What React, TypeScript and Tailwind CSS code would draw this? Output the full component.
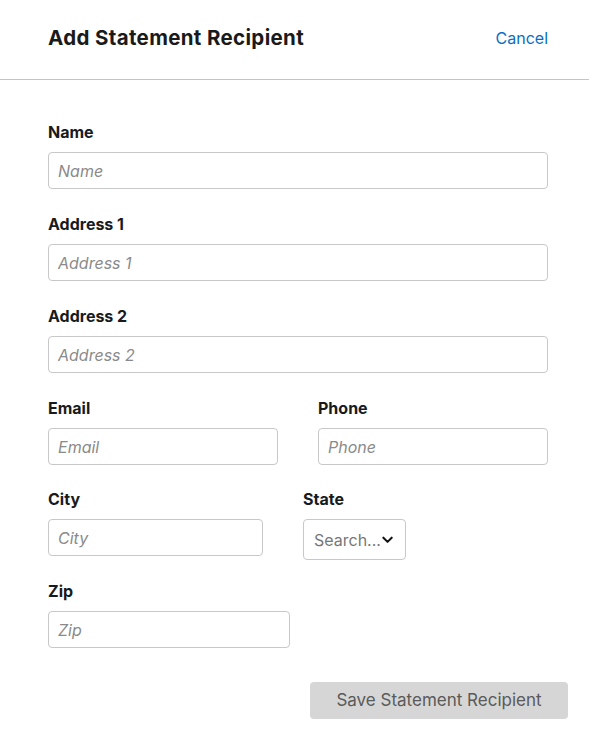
import React from "react";

const font = { fontFamily: "Inter, 'Noto Sans', sans-serif" };

function Field({ label, placeholder, width }: { label: string; placeholder: string; width?: string }) {
  return (
    <div className="flex flex-col">
      <label className="h-6 text-[16px] leading-6 font-bold text-[#1a1a1a] mb-2">{label}</label>
      <input
        placeholder={placeholder}
        className={`h-[37px] ${width ?? "w-full"} rounded-[4px] border border-[#c8c8c8] bg-white px-[9px] text-[16px] italic text-[#222] placeholder:text-[#8a8a8a] outline-none`}
      />
    </div>
  );
}

export default function App() {
  return (
    <div className="w-[589px] h-[739px] bg-white flex flex-col" style={font}>
      <div className="h-[80px] flex items-center justify-between pr-[41px] pl-[48px] border-b border-[#c4c4c4] pb-[3px]">
        <h1 className="text-[20.5px] font-bold text-[#1a1a1a] tracking-[0.35px]">Add Statement Recipient</h1>
        <button className="text-[16px] text-[#0a6fc2]">Cancel</button>
      </div>
      <div className="flex flex-col pl-[48px] pr-[41px] pt-[40px]">
        <div className="flex flex-col gap-[23px]">
          <Field label="Name" placeholder="Name" />
          <Field label="Address 1" placeholder="Address 1" />
          <Field label="Address 2" placeholder="Address 2" />
          <div className="grid grid-cols-2 gap-x-[40px]">
            <Field label="Email" placeholder="Email" />
            <Field label="Phone" placeholder="Phone" />
          </div>
          <div className="flex gap-[40px] -mt-[1px]">
            <div className="w-[215px]">
              <Field label="City" placeholder="City" />
            </div>
            <div className="flex flex-col -mb-[4px]">
              <label className="h-6 text-[16px] leading-6 font-bold text-[#1a1a1a] mb-2">State</label>
              <div className="h-[41px] w-[103px] rounded-[4px] border border-[#c8c8c8] flex items-center pl-[10px] pr-[12px] justify-between">
                <span className="text-[16px] text-[#777]">Search...</span>
                <svg width="12" height="8" viewBox="0 0 12 8" className="ml-[1px]">
                  <path d="M1.5 1.5 L6 6 L10.5 1.5" fill="none" stroke="#111" strokeWidth="2.2" strokeLinecap="round" strokeLinejoin="round" />
                </svg>
              </div>
            </div>
          </div>
          <div className="w-[242px]">
            <Field label="Zip" placeholder="Zip" />
          </div>
        </div>
        <div className="flex justify-end mt-[34px] -mr-[20px]">
          <button className="h-[37px] w-[258px] rounded-[4px] bg-[#d6d6d6] text-[17px] text-[#5a5a5a]">
            Save Statement Recipient
          </button>
        </div>
      </div>
    </div>
  );
}
